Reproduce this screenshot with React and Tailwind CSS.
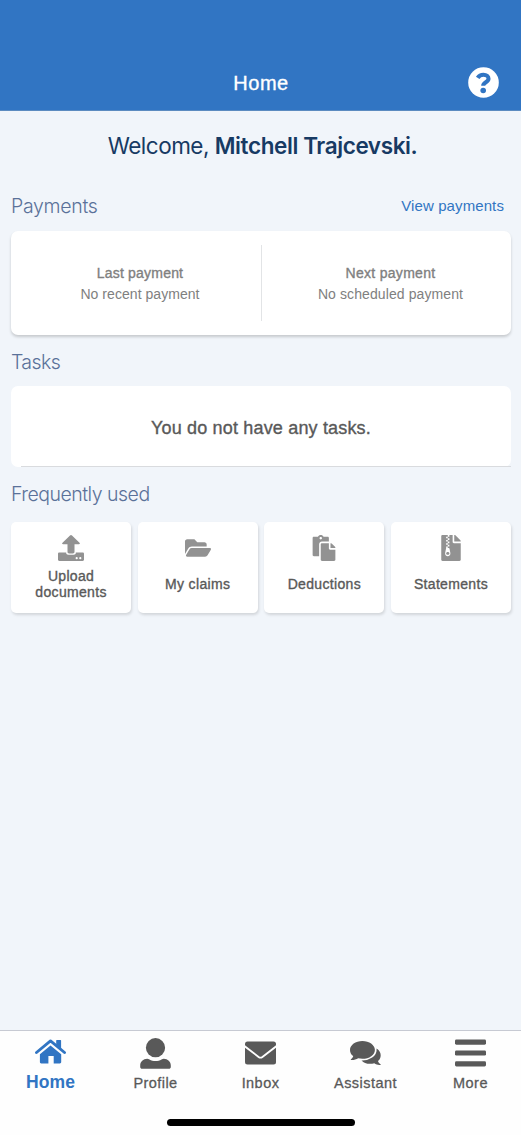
import React from "react";
import { FaFolderOpen, FaPaste, FaFileArchive } from "react-icons/fa";

function HelpIcon() {
  return (
    <svg width="31" height="31" viewBox="0 0 31 31" className="mr-[22px] justify-self-end">
      <circle cx="15.500" cy="15.500" r="15.300" fill="currentColor" />
      <path
        d="M9.700 10.800C11 8.700 13 7.800 15.500 7.800c3 0 5 1.600 5 3.900 0 3.600-5.300 3.500-5.300 7.100"
        fill="none"
        stroke="#3175c3"
        strokeWidth="4.100"
      />
      <circle cx="15.200" cy="23.500" r="2.800" fill="#3175c3" />
    </svg>
  );
}

function HomeIcon() {
  return (
    <svg width="31" height="25" viewBox="0 0 31 25" fill="currentColor">
      <path d="M1.500 13.500 15.500 1.900 29.500 13.500" fill="none" stroke="currentColor" strokeWidth="2.900" strokeLinecap="round" strokeLinejoin="round" />
      <path d="M21.800 0.900h3.700c.4 0 .6.2.6.6v9.200l-4.900-4V1.500c0-.4.2-.6.600-.6z" />
      <path d="M15.500 6.500 26.200 15.300V23c0 .900-.500 1.400-1.400 1.400h-6.100v-7.500h-5.300v7.500H6.300c-.900 0-1.400-.500-1.400-1.400v-7.700z" />
    </svg>
  );
}

function UploadIcon() {
  return (
    <svg width="26" height="26" viewBox="0 0 26 26" fill="currentColor">
      <path d="M13 0c.4 0 .7.2 1 .5l7.500 7.300c.7.700.4 1.500-.6 1.500h-4.400v7.500c0 1-.6 1.600-1.600 1.600h-3.800c-1 0-1.600-.6-1.600-1.600V9.300H5.100c-1 0-1.300-.8-.6-1.500L12 .5c.3-.3.6-.5 1-.5z" />
      <path
        fillRule="evenodd"
        d="M1.300 17.500h6.900v.6c0 .9.9 1.700 2 1.700h5.600c1.100 0 2-.8 2-1.700v-.6h6.900c.7 0 1.300.5 1.300 1.200v6c0 .7-.6 1.200-1.300 1.200H1.300c-.7 0-1.300-.5-1.300-1.200v-6c0-.7.6-1.200 1.300-1.200zM18.700 22.100a1.100 1.100 0 1 0 0 2.200 1.100 1.100 0 0 0 0-2.200zM22.300 22.100a1.100 1.100 0 1 0 0 2.200 1.100 1.100 0 0 0 0-2.200z"
      />
    </svg>
  );
}

function PersonIcon() {
  return (
    <svg width="31" height="31" viewBox="0 0 31 31" fill="currentColor">
      <circle cx="15.500" cy="9.700" r="9.600" />
      <path d="M7.200 20.700c.8 0 1.500.3 2.300.8 1.700 1 3.800 1.500 6 1.500s4.300-.5 6-1.500c.8-.5 1.500-.8 2.300-.8 3.900 0 7 3 7 6.700V29c0 1.100-.8 1.800-1.900 1.800H2.100C1 30.800.2 30.100.2 29v-1.600c0-3.700 3.100-6.700 7-6.700z" />
    </svg>
  );
}

function MailIcon() {
  return (
    <svg width="31" height="24" viewBox="0 0 31 24">
      <rect x="0" y="0.500" width="31" height="23" rx="2.500" fill="currentColor" />
      <path d="M-1 4.700 13.600 15.900c1.300 1 2.500 1 3.800 0L32 4.700" fill="none" stroke="#fefefe" strokeWidth="1.900" />
    </svg>
  );
}

function ChatIcon() {
  return (
    <svg width="31" height="24" viewBox="0 0 31 24" fill="currentColor">
      <path d="M20 6c6.200 0 10.700 3.600 10.700 8.200 0 2.300-1 4.400-2.700 5.900.4 1.300 1.100 2.300 2.500 3.100.4.300.3.800-.2.800-2.200.1-4.300-.5-6-1.700-1.300.4-2.800.5-4.300.5-3.500 0-6.600-1.300-8.400-3.400z" />
      <path
        d="M12.400 0C19.200 0 24.900 3.900 24.900 8.900s-5.700 8.900-12.500 8.900c-1.500 0-2.900-.2-4.200-.5-2 1.300-4.300 1.900-6.900 1.800-.6 0-.7-.5-.3-.8 1.200-.8 1.900-1.900 2.200-3.200C1.200 13.500 0 11.300 0 8.900 0 3.900 5.600 0 12.400 0z"
        stroke="#fefefe"
        strokeWidth="3.400"
        paintOrder="stroke"
      />
    </svg>
  );
}

function MenuIcon() {
  return (
    <svg width="31" height="28" viewBox="0 0 31 28" fill="currentColor">
      <rect y="0.500" width="31" height="5.200" rx="1.400" />
      <rect y="11.400" width="31" height="5.200" rx="1.400" />
      <rect y="22.300" width="31" height="5.200" rx="1.400" />
    </svg>
  );
}

const tiles = [
  { label: "Upload documents", icon: <UploadIcon /> },
  { label: "My claims", icon: <FaFolderOpen size={26} /> },
  { label: "Deductions", icon: <FaPaste size={26} /> },
  { label: "Statements", icon: <FaFileArchive size={26} /> },
];

const tabs = [
  { label: "Profile", icon: <PersonIcon /> },
  { label: "Inbox", icon: <MailIcon /> },
  { label: "Assistant", icon: <ChatIcon /> },
  { label: "More", icon: <MenuIcon /> },
];

const heading = "font-['Inter',sans-serif] text-[19.5px] font-light text-[#5a7199]";
const medium = "[-webkit-text-stroke:0.35px_currentColor]";

export default function App() {
  return (
    <div className="flex h-[1135px] w-[521px] flex-col overflow-hidden bg-[#f1f5fa] font-['Liberation_Sans',Arial,sans-serif]">
      <header className="grid h-[111px] shrink-0 grid-cols-3 items-center border-b border-[#5c8bc0] bg-[#3175c3] pt-[55px] text-white">
        <span />
        <h1 className={`pl-px text-center text-[20px] leading-6 tracking-[0.5px] ${medium}`}>Home</h1>
        <HelpIcon />
      </header>

      <main className="flex flex-1 flex-col pr-[10px] pl-[11px]">
        <p className="flex h-[69px] items-center justify-center pl-[3px] font-['Inter',sans-serif] text-[22.5px] text-[#173a63]">
          <span className="whitespace-pre tracking-[-0.5px]">Welcome, </span>
          <span className="font-semibold tracking-[-0.4px]">Mitchell Trajcevski.</span>
        </p>

        <div className="flex h-[51px] items-center justify-between pt-[2px] pr-[7px]">
          <h2 className={`${heading} tracking-[-0.3px]`}>Payments</h2>
          <a className="text-[15px] tracking-[0.1px] text-[#3175c3]">View payments</a>
        </div>
        <section className="flex h-[104px] items-center rounded-[7px] bg-white text-center text-[14px] leading-[21px] text-[#808080] shadow-[0_2px_3px_rgba(0,0,0,0.18)]">
          <div className="w-[250px] pt-[2px] pl-[8px]">
            <p className={`tracking-[0.2px] ${medium}`}>Last payment</p>
            <p className="tracking-[0.05px]">No recent payment</p>
          </div>
          <div className="h-[76px] w-px bg-[#e2e4e6]" />
          <div className="w-[249px] pt-[2px] pl-[8px]">
            <p className={`tracking-[0.3px] ${medium}`}>Next payment</p>
            <p className="tracking-[0.1px]">No scheduled payment</p>
          </div>
        </section>

        <h2 className={`flex h-[51px] items-center pt-[4px] ${heading} tracking-[-0.6px]`}>Tasks</h2>
        <section className="flex h-[81px] flex-col rounded-[7px] bg-white">
          <p className={`flex flex-1 items-center justify-center pt-[4px] text-[18px] tracking-[0.17px] text-[#595959] ${medium}`}>
            You do not have any tasks.
          </p>
          <div className="ml-[10px] h-px bg-[#d9dbde]" />
        </section>

        <h2 className={`flex h-[55px] items-center ${heading} tracking-[-0.5px]`}>Frequently used</h2>
        <section className="grid grid-cols-4 gap-[6.500px]">
          {tiles.map((t) => (
            <div
              key={t.label}
              className="flex h-[91px] flex-col items-center rounded-[5px] bg-white shadow-[1px_2px_3px_rgba(0,0,0,0.13)]"
            >
              <div className="flex h-[45px] items-center pt-[6px] text-[#929292]">{t.icon}</div>
              <p
                className={`flex h-[34px] w-[84px] items-center justify-center text-center text-[14px] leading-[16.500px] tracking-[0.33px] text-[#595959] ${medium}`}
              >
                {t.label}
              </p>
            </div>
          ))}
        </section>
      </main>

      <nav className="flex h-[105px] shrink-0 flex-col items-center border-t border-[#c7cad3] bg-[#fefefe]">
        <div className="-mx-0.5 grid w-[525px] shrink-0 grid-cols-5 text-[#595959]">
          <div className="flex flex-col items-center text-[#3175c3]">
            <div className="flex h-[41px] items-center"><HomeIcon /></div>
            <span className="text-[17.500px] leading-5 font-bold tracking-[0.1px]">Home</span>
          </div>
          {tabs.map((t) => (
            <div key={t.label} className="flex flex-col items-center">
              <div className="flex h-[42px] items-center pt-[2px]">{t.icon}</div>
              <span className="text-[14.500px] leading-5 tracking-[0.45px] [-webkit-text-stroke:0.3px_currentColor]">{t.label}</span>
            </div>
          ))}
        </div>
        <div className="mt-[26px] h-[7px] w-[188px] rounded-full bg-black" />
      </nav>
    </div>
  );
}
